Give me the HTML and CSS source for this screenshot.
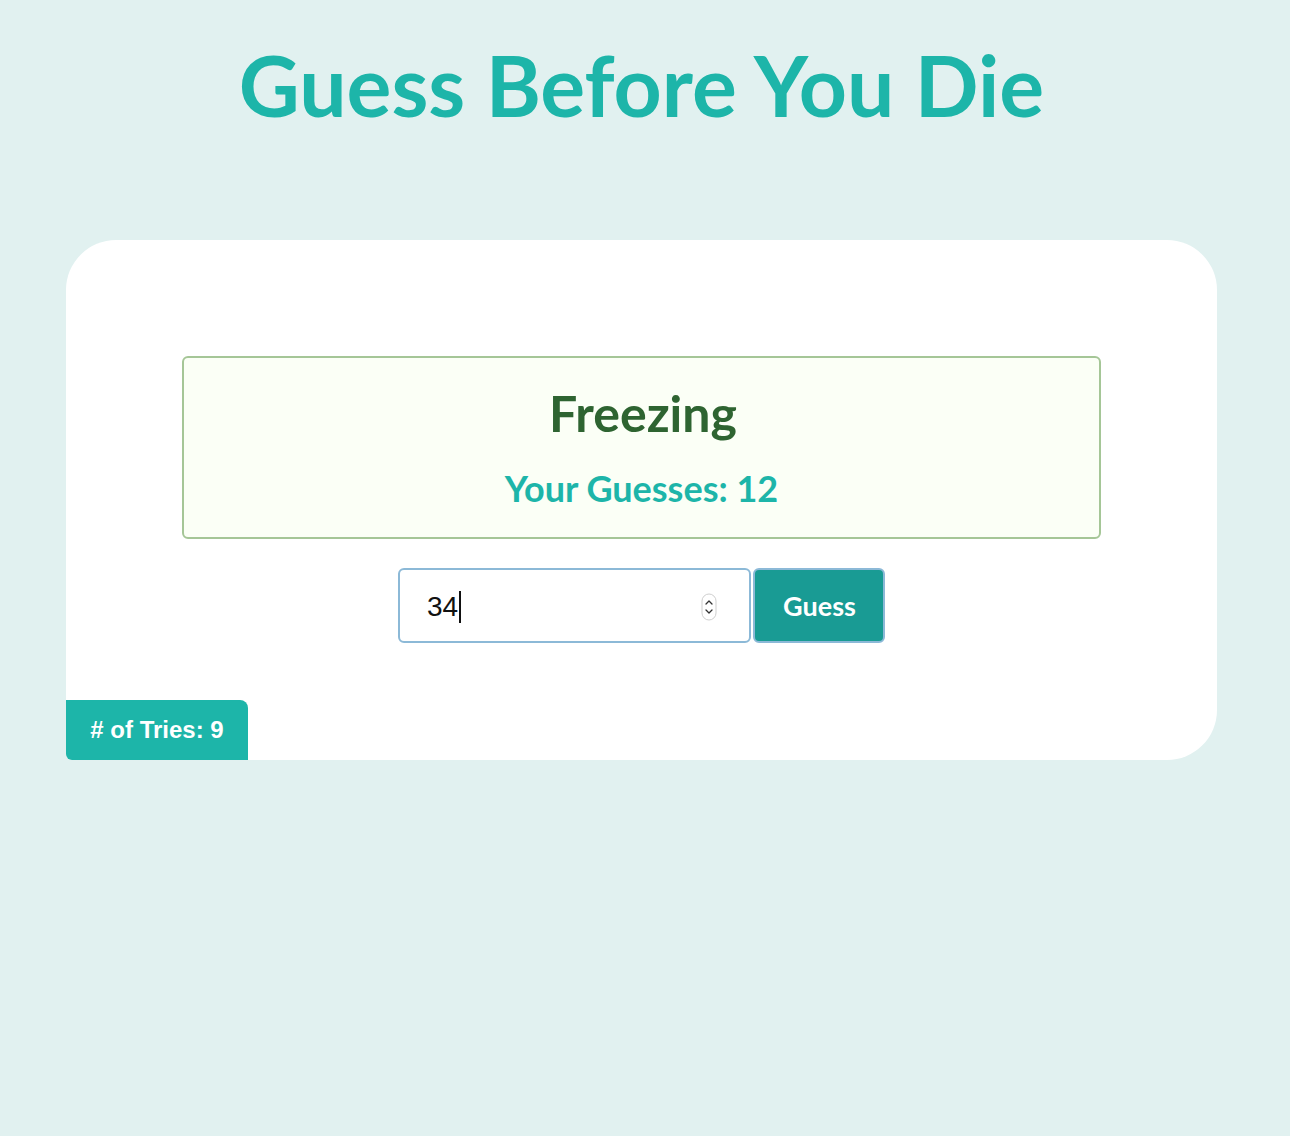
FILE: index.html
```html
<!DOCTYPE html>
<html lang="en">
<head>
<meta charset="utf-8">
<title>Guess Before You Die</title>
<link rel="stylesheet" href="styles.css">
</head>
<body>
  <h1 class="title">Guess Before You Die</h1>
  <main class="card">
    <section class="status">
      <h2 class="status-hint">Freezing</h2>
      <p class="status-guesses">Your Guesses: 12</p>
    </section>
    <form class="guess-form" onsubmit="return false">
      <div class="input-wrap">
        <input class="guess-input" type="text" value="34" aria-label="Your guess">
        <span class="fake-caret"></span>
        <span class="spinner">
          <svg width="16" height="28" viewBox="0 0 16 28">
            <rect x="1" y="1" width="14" height="26" rx="7" ry="7" fill="#fff" stroke="#cfcfcf" stroke-width="1"/>
            <path d="M5 11 L8 8 L11 11" fill="none" stroke="#333" stroke-width="1.3" stroke-linecap="round" stroke-linejoin="round"/>
            <path d="M5 17 L8 20 L11 17" fill="none" stroke="#333" stroke-width="1.3" stroke-linecap="round" stroke-linejoin="round"/>
          </svg>
        </span>
      </div>
      <button class="guess-btn" type="submit">Guess</button>
    </form>
    <div class="tries"># of Tries: 9</div>
  </main>
</body>
</html>
```

FILE: styles.css
```css
* { box-sizing: border-box; }

html, body {
  margin: 0;
  padding: 0;
}

body {
  background: #e1f1f0;
  min-height: 1136px;
  font-family: Lato, "Open Sans", sans-serif;
}

.title {
  margin: 0;
  padding: 35px 7px 0 0;
  height: 240px;
  text-align: center;
  font-family: Lato, sans-serif;
  font-weight: 700;
  font-size: 84px;
  line-height: 1.2;
  color: #1db5a9;
}

.card {
  margin: 0 73px 0 66px;
  height: 520px;
  background: #ffffff;
  border-radius: 50px 50px 50px 6px;
  padding-top: 116px;
  display: flex;
  flex-direction: column;
  align-items: center;
}

.status {
  width: 919px;
  height: 183px;
  border: 2px solid #a5c697;
  border-radius: 6px;
  background: #fbfff6;
  padding: 25px 0 26px;
  display: flex;
  flex-direction: column;
  align-items: center;
  gap: 24px;
}

.status-hint {
  margin: 0;
  padding-left: 3px;
  font-family: Lato, sans-serif;
  font-weight: 700;
  font-size: 50px;
  line-height: 1.2;
  color: #2e6431;
}

.status-guesses {
  margin: 0;
  font-family: Lato, sans-serif;
  font-weight: 700;
  font-size: 36px;
  line-height: 1.2;
  color: #1db5a9;
}

.guess-form {
  margin-top: 29px;
  display: flex;
  gap: 2px;
}

.input-wrap {
  position: relative;
  width: 353px;
  height: 75px;
}

.guess-input {
  width: 100%;
  height: 100%;
  margin: 0;
  border: 2px solid #8cb9d7;
  border-radius: 6px;
  background: #fff;
  padding: 2px 0 0 27px;
  font-family: "Liberation Sans", Arial, sans-serif;
  font-size: 28px;
  color: #111;
  outline: none;
}

.fake-caret {
  position: absolute;
  left: 61px;
  top: 23px;
  width: 2px;
  height: 32px;
  background: #111;
}

.spinner {
  position: absolute;
  right: 34px;
  top: 25px;
  width: 16px;
  height: 28px;
  display: block;
}

.spinner svg { display: block; }

.guess-btn {
  width: 132px;
  height: 75px;
  margin: 0;
  border: 2px solid #8cb9d7;
  border-radius: 6px;
  background: #199b94;
  color: #ffffff;
  font-family: Lato, sans-serif;
  font-weight: 700;
  font-size: 27px;
  padding: 0 0 0 1px;
  cursor: pointer;
}

.tries {
  margin-top: auto;
  align-self: flex-start;
  width: 182px;
  height: 60px;
  background: #1db5a9;
  color: #ffffff;
  border-radius: 0 8px 0 6px;
  font-family: "Liberation Sans", Arial, sans-serif;
  font-weight: 700;
  font-size: 24px;
  display: flex;
  align-items: center;
  justify-content: center;
}
```
